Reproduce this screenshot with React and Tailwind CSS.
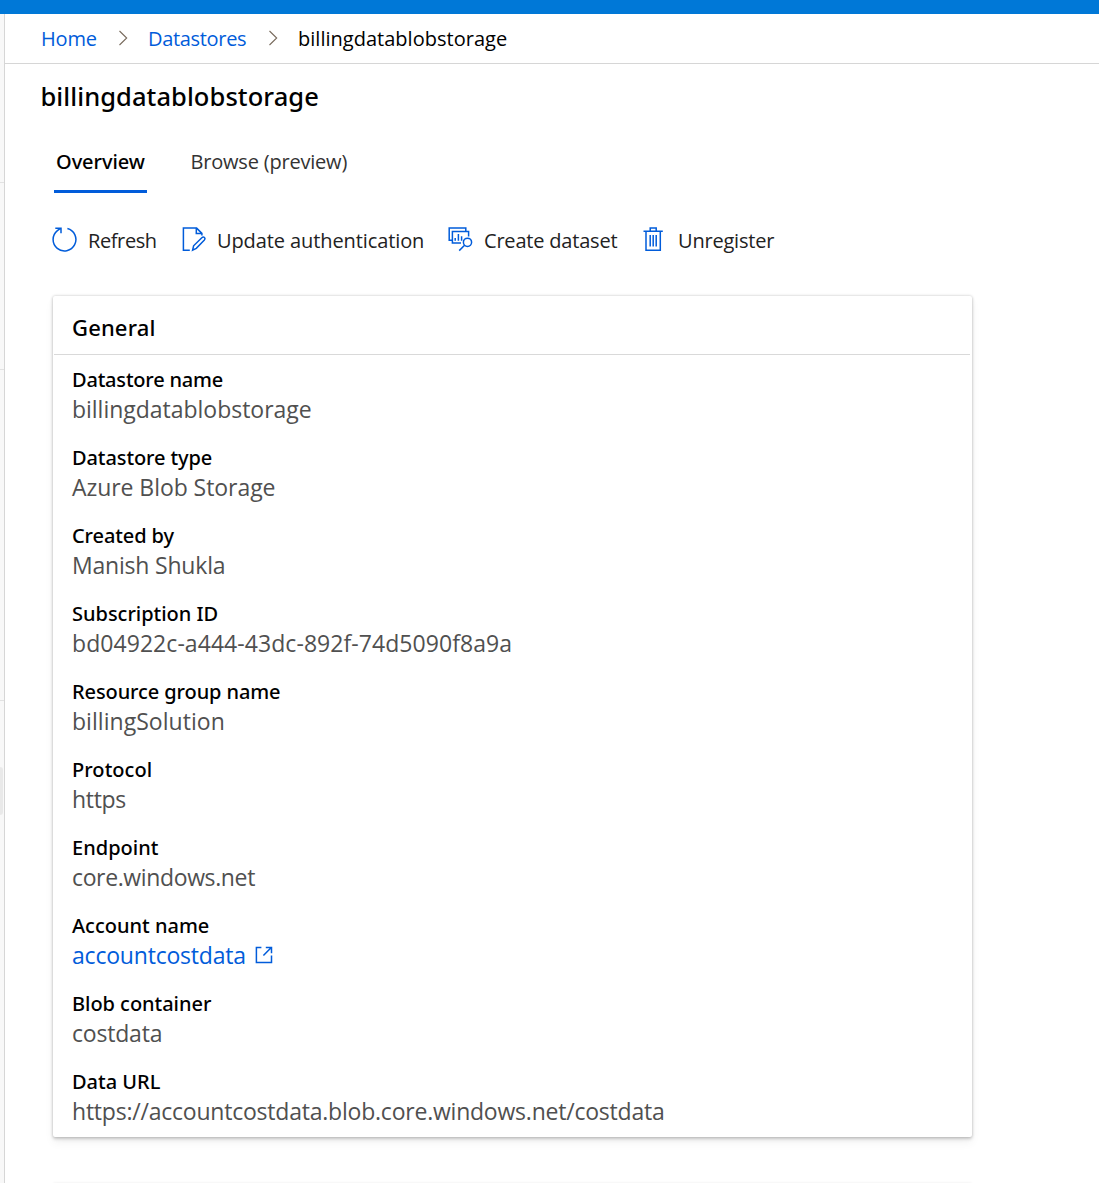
import React from 'react';

const RefreshIcon = () => (
  <svg width="25" height="25" viewBox="0 0 25 25" fill="none" stroke="#015cda" strokeWidth="1.5">
    <path d="M15.4 1.5A11.4 11.4 0 1 1 5.4 3.6L8.8 1.2M3.3 1.2H9V6.2" />
  </svg>
);

const EditDocumentIcon = () => (
  <svg width="25" height="25" viewBox="0 0 25 25" fill="none" stroke="#015cda" strokeWidth="1.5">
    <path d="M7.8 23.3H1.4V1.1H14.6L19.9 6.4V8.4M14.3 1.1V6.6H19.9" />
    <path d="M10.6 23.2L11.6 18.8L19.8 10.7Q21.3 9.4 22.5 10.5Q23.6 11.7 22.4 13L14.3 21.3Z" />
  </svg>
);

const DatasetIcon = () => (
  <svg width="25" height="25" viewBox="0 0 25 25" fill="none" stroke="#015cda" strokeWidth="1.5">
    <path d="M4 13.3H1.2V1H17.8V4.2M13 16H4.4V4.4H20.6V9.6" />
    <path d="M7.2 13.7V11M10.4 13.7V7M13.6 13.7V9.3" />
    <circle cx="19.5" cy="15.3" r="4.1" />
    <path d="M16.6 18.2L11.2 23.6" />
  </svg>
);

const TrashIcon = () => (
  <svg width="21" height="25" viewBox="0 0 21 25" fill="none" stroke="#015cda" strokeWidth="1.5">
    <path d="M0.5 4.2H19.8M7.2 4V1.1H13.2V4M3 4.2V23.3H17.3V4.2" />
    <path d="M7.2 8V19.6M10.2 8V19.6M13.2 8V19.6" />
  </svg>
);

const ExternalIcon = () => (
  <svg width="18" height="18" viewBox="0 0 18 18" fill="none" stroke="#015cda" strokeWidth="1.5">
    <path d="M6.4 1.4H1.4V16.5H16.5V9.4M8.4 9.6L16.3 1.5M10.8 1.4H16.5V7.2" />
  </svg>
);

const Chevron = () => (
  <svg width="10" height="16" viewBox="0 0 10 16" fill="none" stroke="#776a5c" strokeWidth="1.1" className="-mt-0.5">
    <path d="M1.5 1L8.7 8L1.5 15" />
  </svg>
);

const actions = [
  { label: 'Refresh', icon: <RefreshIcon />, box: 'w-[130px]', slot: 'w-[36px]', track: 'tracking-[-0.4px]' },
  { label: 'Update authentication', icon: <EditDocumentIcon />, box: 'w-[266px]', slot: 'w-[35px]', track: 'tracking-[-0.1px]' },
  { label: 'Create dataset', icon: <DatasetIcon />, box: 'w-[195px]', slot: 'w-[36px]', track: 'tracking-[-0.2px]' },
  { label: 'Unregister', icon: <TrashIcon />, box: 'w-[140px]', slot: 'w-[35px]', track: 'tracking-[-0.2px]' },
];

const fields = [
  { label: 'Datastore name', value: 'billingdatablobstorage', track: 'tracking-[-0.02px]', labelTrack: 'tracking-[-0.2px]' },
  { label: 'Datastore type', value: 'Azure Blob Storage' },
  { label: 'Created by', value: 'Manish Shukla', track: 'tracking-[-0.2px]' },
  { label: 'Subscription ID', value: 'bd04922c-a444-43dc-892f-74d5090f8a9a', track: 'tracking-[0.06px]', labelTrack: 'tracking-[-0.02px]' },
  { label: 'Resource group name', value: 'billingSolution', track: 'tracking-[0.04px]' },
  { label: 'Protocol', value: 'https', track: 'tracking-[-0.3px]', labelTrack: 'tracking-[0.05px]' },
  { label: 'Endpoint', value: 'core.windows.net', track: 'tracking-[-0.37px]', labelTrack: 'tracking-[0.02px]' },
  { label: 'Account name', value: 'accountcostdata', link: true, labelTrack: 'tracking-[0px]' },
  { label: 'Blob container', value: 'costdata', track: 'tracking-[-0.2px]', labelTrack: 'tracking-[-0.04px]' },
  { label: 'Data URL', value: 'https://accountcostdata.blob.core.windows.net/costdata', track: 'tracking-[-0.22px]', labelTrack: 'tracking-[0px]' },
];

function Field({ label, value, link, track = 'tracking-[-0.06px]', labelTrack = 'tracking-[-0.1px]' }) {
  return (
    <div>
      <dt className={`${labelTrack} h-[29px] font-['Noto_Sans',sans-serif] text-[20px] leading-[30px] font-medium text-black`}>{label}</dt>
      <dd className="h-[31px] text-[23px] leading-[30px]">
        {link ? (
          <a className="flex items-center tracking-[-0.2px] text-[#015cda]">
            <span className="mr-[9px]">{value}</span>
            <ExternalIcon />
          </a>
        ) : (
          <span className={`${track} text-[#505050]`}>{value}</span>
        )}
      </dd>
    </div>
  );
}

function SideRail() {
  return (
    <aside className="flex w-[5px] shrink-0 flex-col border-r border-[#d6d6d6] bg-[#f8f8f8]">
      <div className="h-[169px] border-b border-[#e2e2e2]" />
      <div className="h-[187px] border-b border-[#e2e2e2]" />
      <div className="h-[331px] border-b border-[#e2e2e2]" />
      <div className="mt-[66px] h-12 w-[3px] rounded-r-[3px] bg-[#e9e9e9]" />
    </aside>
  );
}

export default function App() {
  return (
    <div className="flex h-[1183px] w-[1099px] flex-col overflow-hidden bg-white font-['Open_Sans','Noto_Sans',sans-serif] whitespace-nowrap">
      <div className="h-[14px] shrink-0 bg-[#0078d7]" />
      <div className="flex min-h-0 flex-1">
        <SideRail />
        <main className="min-w-0 flex-1">
          <nav className="flex h-[50px] items-center border-b border-[#d6d6d6] pl-9 text-[20px] leading-[26px] text-[#015cda]">
            <a className="w-[77px] tracking-[-0.2px]">Home</a>
            <Chevron />
            <a className="ml-5 w-[120px] tracking-[-0.32px]">Datastores</a>
            <Chevron />
            <span className="ml-5 tracking-[0.02px] text-black">billingdatablobstorage</span>
          </nav>

          <h1 className="mt-[14px] h-9 pl-[35.5px] font-['Noto_Sans',sans-serif] text-[25.5px] leading-9 font-medium tracking-[0.06px] text-black">billingdatablobstorage</h1>

          <div className="mt-[33px] flex h-[46px] pl-[49px] text-[20px] leading-[30px]">
            <div className="w-[93px] border-b-3 border-[#015cda] pl-[2px] font-['Noto_Sans',sans-serif] font-medium tracking-[-0.05px] text-black">Overview</div>
            <div className="ml-[43.5px] tracking-[-0.2px] text-[#333]">Browse (preview)</div>
          </div>

          <div className="mt-[31px] flex h-8 pl-[47px] text-[20px] leading-[34px] text-[#222]">
            {actions.map((a) => (
              <button key={a.label} className={`${a.box} flex text-left`}>
                <span className={`${a.slot} shrink-0 pt-[3px]`}>{a.icon}</span>
                <span className={a.track}>{a.label}</span>
              </button>
            ))}
          </div>

          <section className="mt-10 ml-12 h-[841px] w-[919px] rounded-[2px] bg-white shadow-[0_1.6px_3.6px_rgba(0,0,0,0.18),0_0_3px_rgba(0,0,0,0.16),0_6px_10px_rgba(0,0,0,0.05)]">
            <h2 className="mr-0.5 ml-px h-[59px] border-b border-[#d9d9d9] pt-[15px] pl-[18px] font-['Noto_Sans',sans-serif] text-[22px] leading-8 font-medium tracking-[0.15px] text-black">General</h2>
            <dl className="flex flex-col gap-[18px] pt-[10px] pl-[19px]">
              {fields.map((f) => (
                <Field key={f.label} {...f} />
              ))}
            </dl>
          </section>
          <section className="mt-[46px] ml-12 h-20 w-[919px] rounded-[2px] bg-white shadow-[0_0_3px_rgba(0,0,0,0.08)]" />
        </main>
      </div>
    </div>
  );
}
